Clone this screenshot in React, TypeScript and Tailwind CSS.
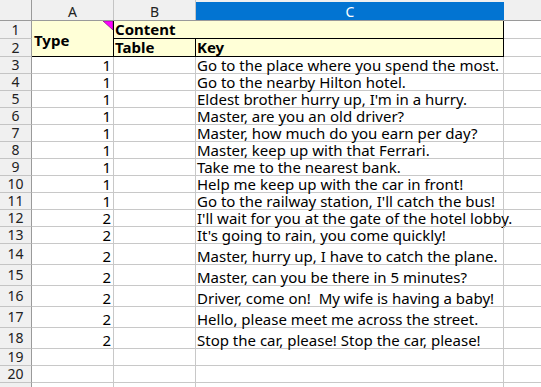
const rows: { n: number; type: number; text: string; h: number }[] = [
  { n: 3, type: 1, text: "Go to the place where you spend the most.", h: 17 },
  { n: 4, type: 1, text: "Go to the nearby Hilton hotel.", h: 17 },
  { n: 5, type: 1, text: "Eldest brother hurry up, I'm in a hurry.", h: 17 },
  { n: 6, type: 1, text: "Master, are you an old driver?", h: 17 },
  { n: 7, type: 1, text: "Master, how much do you earn per day?", h: 17 },
  { n: 8, type: 1, text: "Master, keep up with that Ferrari.", h: 17 },
  { n: 9, type: 1, text: "Take me to the nearest bank.", h: 17 },
  { n: 10, type: 1, text: "Help me keep up with the car in front!", h: 17 },
  { n: 11, type: 1, text: "Go to the railway station, I'll catch the bus!", h: 17 },
  { n: 12, type: 2, text: "I'll wait for you at the gate of the hotel lobby.", h: 17 },
  { n: 13, type: 2, text: "It's going to rain, you come quickly!", h: 17 },
  { n: 14, type: 2, text: "Master, hurry up, I have to catch the plane.", h: 21 },
  { n: 15, type: 2, text: "Master, can you be there in 5 minutes?", h: 21 },
  { n: 16, type: 2, text: "Driver, come on!\u00a0 My wife is having a baby!", h: 21 },
  { n: 17, type: 2, text: "Hello, please meet me across the street.", h: 21 },
  { n: 18, type: 2, text: "Stop the car, please! Stop the car, please!", h: 21 },
];

const RowHead = ({ n, className = "" }: { n?: number; className?: string }) => (
  <div
    className={`flex w-[32px] shrink-0 items-center justify-center border-r border-b border-r-[#9a9a9a] border-b-[#c4c4c4] bg-[#f0f0f0] text-[14px] leading-[16px] text-[#222] ${className}`}
  >
    {n}
  </div>
);

function DataRow({ n, type, text, h }: { n?: number; type?: number; text?: string; h: number }) {
  const height = h === 21 ? "h-[21px]" : "h-[17px]";
  return (
    <div className={`flex ${height}`}>
      <RowHead n={n} />
      <div className="flex w-[82px] shrink-0 items-end justify-end border-r border-b border-[#c8c8c8] pr-[2px] leading-[16px]">
        {type}
      </div>
      <div className="w-[82px] shrink-0 border-r border-b border-[#c8c8c8]" />
      <div className="flex w-[308px] shrink-0 items-end overflow-visible whitespace-nowrap border-r border-b border-[#c8c8c8] pl-[1px] leading-[16px]">
        {text}
      </div>
      <div className="flex-1 border-b border-[#c8c8c8]" />
    </div>
  );
}

export default function App() {
  return (
    <div className="h-[387px] w-[541px] overflow-hidden bg-white text-[15px] text-black [font-family:'Noto_Sans',sans-serif]">
      {/* column headers */}
      <div className="flex h-[21px] border-b border-[#9a9a9a] bg-[#f0f0f0] text-[14px] text-[#222]">
        <div className="w-[32px] shrink-0 border-r border-[#9a9a9a]" />
        <div className="flex w-[82px] shrink-0 items-center justify-center border-r border-[#c4c4c4] pt-[2px]">A</div>
        <div className="flex w-[82px] shrink-0 items-center justify-center border-r border-[#c4c4c4] pt-[2px]">B</div>
        <div className="w-[308px] shrink-0 pt-[2px]">
          <div className="flex h-full items-center justify-center bg-[#0274d2] text-white">C</div>
        </div>
        <div className="flex-1" />
      </div>

      {/* header block rows 1-2 */}
      <div className="flex h-[36px]">
        <div className="flex w-[32px] shrink-0 flex-col">
          <RowHead n={1} className="h-[18px]" />
          <RowHead n={2} className="h-[18px]" />
        </div>
        <div className="relative flex w-[82px] shrink-0 items-center border-r border-b border-black bg-[#ffffd7] pl-[2px] pt-[4px] text-[15px] font-bold">
          Type
          <svg className="absolute right-0 top-0" width="10" height="9" viewBox="0 0 10 9">
            <polygon points="0,0 10,0 10,9" fill="#ff00ff" stroke="#8a1a8a" strokeWidth="0.8" />
          </svg>
        </div>
        <div className="flex w-[390px] shrink-0 flex-col">
          <div className="flex h-[18px] items-end border-r border-b border-black bg-[#ffffd7] pl-[1px] text-[15px] font-bold leading-[17px]">
            Content
          </div>
          <div className="flex h-[18px]">
            <div className="flex w-[82px] shrink-0 items-end border-r border-b border-black bg-[#ffffd7] pl-[1px] text-[15px] font-bold leading-[17px]">
              Table
            </div>
            <div className="flex w-[308px] shrink-0 items-end border-r border-b border-black bg-[#ffffd7] pl-[1px] text-[15px] font-bold leading-[17px]">
              Key
            </div>
          </div>
        </div>
        <div className="flex flex-1 flex-col">
          <div className="h-[18px] border-b border-[#c8c8c8]" />
          <div className="h-[18px] border-b border-[#c8c8c8]" />
        </div>
      </div>

      {rows.map((r) => (
        <DataRow key={r.n} n={r.n} type={r.type} text={r.text} h={r.h} />
      ))}
      <DataRow n={19} h={17} />
      <DataRow n={20} h={17} />
      <DataRow h={17} />
    </div>
  );
}
